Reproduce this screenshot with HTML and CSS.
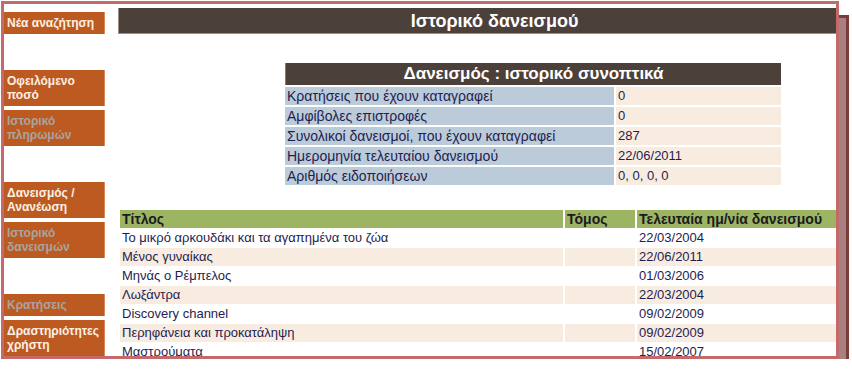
FILE: index.html
```html
<!DOCTYPE html>
<html lang="el">
  <head>
    <meta charset="UTF-8" />
    <meta name="viewport" content="width=device-width, initial-scale=1.0" />
    <title>Ιστορικό δανεισμού</title>
    <link rel="stylesheet" href="styles.css">
  </head>
  <body>
    <div class="frame">
      <div class="sidebar">
        <div class="menu-group">
          <a class="menu-item" href="#">Νέα αναζήτηση</a>
        </div>
        <div class="menu-group">
          <a class="menu-item" href="#">Οφειλόμενο ποσό</a>
          <a class="menu-item visited" href="#">Ιστορικό πληρωμών</a>
        </div>
        <div class="menu-group">
          <a class="menu-item" href="#">Δανεισμός / Ανανέωση</a>
          <a class="menu-item visited" href="#">Ιστορικό δανεισμών</a>
        </div>
        <div class="menu-group">
          <a class="menu-item visited" href="#">Κρατήσεις</a>
          <a class="menu-item" href="#">Δραστηριότητες χρήστη</a>
        </div>
      </div>

      <div class="main">
        <div class="page-title">Ιστορικό δανεισμού</div>

        <table class="summary">
          <tr>
            <th colspan="2">Δανεισμός : ιστορικό συνοπτικά</th>
          </tr>
          <tr>
            <td class="label">Κρατήσεις που έχουν καταγραφεί</td>
            <td class="value">0</td>
          </tr>
          <tr>
            <td class="label">Αμφίβολες επιστροφές</td>
            <td class="value">0</td>
          </tr>
          <tr>
            <td class="label">Συνολικοί δανεισμοί, που έχουν καταγραφεί</td>
            <td class="value">287</td>
          </tr>
          <tr>
            <td class="label">Ημερομηνία τελευταίου δανεισμού</td>
            <td class="value">22/06/2011</td>
          </tr>
          <tr>
            <td class="label">Αριθμός ειδοποιήσεων</td>
            <td class="value">0, 0, 0, 0</td>
          </tr>
        </table>

        <table class="loans">
          <tr>
            <th class="col-title">Τίτλος</th>
            <th class="col-vol">Τόμος</th>
            <th>Τελευταία ημ/νία δανεισμού</th>
          </tr>
          <tr>
            <td>Το μικρό αρκουδάκι και τα αγαπημένα του ζώα</td>
            <td></td>
            <td>22/03/2004</td>
          </tr>
          <tr>
            <td>Μένος γυναίκας</td>
            <td></td>
            <td>22/06/2011</td>
          </tr>
          <tr>
            <td>Μηνάς ο Ρέμπελος</td>
            <td></td>
            <td>01/03/2006</td>
          </tr>
          <tr>
            <td>Λωξάντρα</td>
            <td></td>
            <td>22/03/2004</td>
          </tr>
          <tr>
            <td>Discovery channel</td>
            <td></td>
            <td>09/02/2009</td>
          </tr>
          <tr>
            <td>Περηφάνεια και προκατάληψη</td>
            <td></td>
            <td>09/02/2009</td>
          </tr>
          <tr>
            <td>Μαστρούματα</td>
            <td></td>
            <td>15/02/2007</td>
          </tr>
        </table>
      </div>
    </div>
  </body>
</html>
```

FILE: styles.css
```css
body {
  margin: 0;
  font-family: "Liberation Sans", Arial, sans-serif;
  background: #fff;
}

.frame {
  margin: 1px 0 0 1px;
  width: 838px;
  height: 358px;
  box-sizing: border-box;
  border: 3px solid #c46a6a;
  background: #fff;
  overflow: hidden;
  display: flex;
  align-items: flex-start;
  box-shadow: 11px 13px 0 -4px #a88080, 11px 13px 0 -1px #7d3c3c;
}

/* left menu */
.sidebar {
  flex: none;
  width: 101px;
  padding-top: 8px;
}
.menu-group {
  /* collapses with the last item's 4px */
  margin-bottom: 36px;
}
.menu-item {
  display: block;
  margin-bottom: 4px;
  padding: 4px 0 4px 3px;
  background: #bd5a22;
  border-right: 1px solid #d88a5e;
  color: #fcf0e2;
  font: bold 12px/14px "Liberation Sans", Arial, sans-serif;
  text-decoration: none;
}
.menu-item.visited {
  color: #a8a49e;
}

/* content */
.main {
  flex: none;
  width: 752px;
  margin-left: 13px;
  padding-top: 4px;
}
.page-title {
  height: 25px;
  line-height: 26px;
  background: #4c403b;
  border-left: 1px solid #9a8c87;
  border-bottom: 1px solid #9a8c87;
  color: #fff;
  font-size: 18px;
  font-weight: bold;
  text-align: center;
}

.summary {
  margin: 27px 0 0 165px;
  width: 500px;
  border-spacing: 2px;
  font-size: 13px;
  color: #1e1e50;
}
.summary th {
  height: 22px;
  padding: 0;
  background: #4c403b;
  border-left: 1px solid #8c7d78;
  color: #fff;
  font-size: 17px;
  line-height: 20px;
}
.summary td {
  height: 18px;
  padding: 0 2px;
  line-height: 18px;
}
.summary .label {
  width: 325px;
  background: #bccbda;
  font-size: 14px;
}
.summary .value {
  background: #f8ebe0;
}

.loans {
  margin-top: 22px;
  width: 752px;
  border-spacing: 2px 1px;
  font-size: 13px;
  color: #1e1e50;
}
.loans th {
  height: 18px;
  padding: 0 2px;
  background: #9db563;
  color: #1a1a20;
  font-size: 14px;
  text-align: left;
  line-height: 18px;
}
.loans .col-title {
  width: 439px;
}
.loans .col-vol {
  width: 66px;
}
.loans td {
  height: 18px;
  padding: 0 2px;
  line-height: 18px;
  white-space: nowrap;
}
.loans tr:nth-child(odd) td {
  background: #f8ebe0;
}
```
